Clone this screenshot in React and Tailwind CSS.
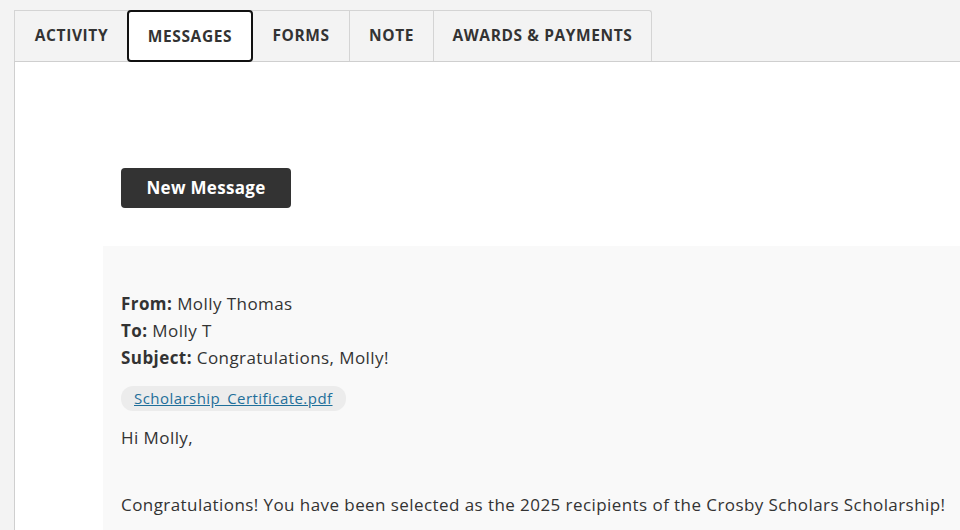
export default function App() {
  const tabs = [
    ["ACTIVITY", "w-[113px]"],
    ["MESSAGES", "w-[126px]"],
    ["FORMS", "w-[96px]"],
    ["NOTE", "w-[84px]"],
    ["AWARDS & PAYMENTS", "w-[218px]"],
  ];
  return (
    <div className="min-h-[530px] w-[960px] overflow-hidden bg-[#f3f3f3] text-[#333]" style={{ fontFamily: "'Open Sans', Lato, sans-serif" }}>
      <div className="pl-[14px] pt-[10px]">
        <div className="flex border-b border-[#cfcfcf]">
          <div className="flex rounded-tr-[3px] border-t border-r border-l border-[#d4d4d4]">
            {tabs.map(([t, w], i) => (
              <div
                key={t}
                className={
                  i === 1
                    ? "-mt-px -mb-px -ml-px flex h-[52px] items-center justify-center rounded-[4px] border-2 border-[#111] bg-white pt-[2px] text-[15.5px] font-bold tracking-[0.6px] " + w
                    : "flex h-[50px] items-center justify-center text-[15.5px] font-bold tracking-[0.6px] " + w + (i > 2 ? " border-l border-[#d4d4d4]" : "")
                }
              >
                {t}
              </div>
            ))}
          </div>
        </div>
        <div className="min-h-[470px] border-l border-[#cfcfcf] bg-white pt-[106px]">
          <div className="pl-[106px]">
            <button className="h-[40px] w-[170px] rounded-[4px] bg-[#333] text-[17px] font-bold tracking-[0.3px] text-white">New Message</button>
          </div>
          <div className="mt-[38px] ml-[88px] bg-[#f9f9f9] pl-[18px] pt-[44px] pb-[20px] text-[17px] leading-[27px] tracking-[0.43px]">
            <div><span className="font-bold">From:</span> Molly Thomas</div>
            <div><span className="font-bold">To:</span> Molly T</div>
            <div><span className="font-bold">Subject:</span> Congratulations, Molly!</div>
            <div className="mt-[13px]">
              <span className="inline-block h-[25px] rounded-[12px] bg-[#ececec] px-[13px] text-[15px] leading-[25px] tracking-[0.45px] text-[#1f6f9a] underline">Scholarship_Certificate.pdf</span>
            </div>
            <div className="mt-[13px]">Hi Molly,</div>
            <div className="h-[40px]"></div>
            <div className="whitespace-nowrap">Congratulations! You have been selected as the 2025 recipients of the Crosby Scholars Scholarship!</div>
          </div>
        </div>
      </div>
    </div>
  );
}
